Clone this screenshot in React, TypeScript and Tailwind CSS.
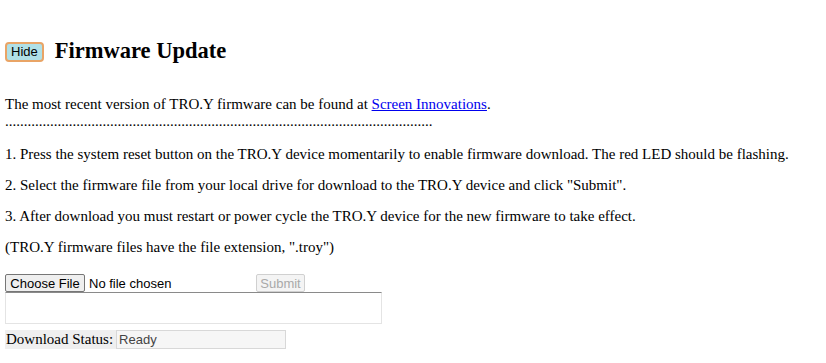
import React from "react";

export default function App() {
  const dots = ".".repeat(114);
  return (
    <div className="font-['Liberation_Serif',serif] text-[15px] leading-[17px] text-black bg-white w-[826px] h-[363px] overflow-hidden pl-[5px]">
      <div className="flex items-center gap-[11px] pt-[42px] h-[62px]">
        <button className="h-[20px] px-[4px] rounded-[4px] border-2 border-[#e9a466] bg-[#b0e0e6] font-['Liberation_Sans',sans-serif] text-[13px] leading-[14px] text-black">
          Hide
        </button>
        <h1 className="text-[22.5px] leading-[24px] font-bold -mt-[3px]">Firmware Update</h1>
      </div>
      <p className="mt-[34px]">
        The most recent version of TRO.Y firmware can be found at{" "}
        <a href="#" className="text-[#0000ee] underline">
          Screen Innovations
        </a>
        .
        <br />
        {dots}
      </p>
      <p className="mt-[16px]">
        1. Press the system reset button on the TRO.Y device momentarily to enable firmware download. The red LED should be flashing.
      </p>
      <p className="mt-[14px]">
        2. Select the firmware file from your local drive for download to the TRO.Y device and click "Submit".
      </p>
      <p className="mt-[14px]">
        3. After download you must restart or power cycle the TRO.Y device for the new firmware to take effect.
      </p>
      <p className="mt-[14px]">(TRO.Y firmware files have the file extension, ".troy")</p>
      <div className="mt-[18px] flex items-center h-[18px] font-['Liberation_Sans',sans-serif] text-[13px] leading-[15px]">
        <span className="h-[18px] w-[80px] flex items-center justify-center border border-[#767676] rounded-[2px] bg-[#efefef] text-black">
          Choose File
        </span>
        <span className="ml-[4px] w-[167px]">No file chosen</span>
        <span className="h-[18px] w-[49px] flex items-center justify-center border border-[#d0d0d0] rounded-[2px] bg-[#f4f4f4] text-[#a9a9a9]">
          Submit
        </span>
      </div>
      <div className="w-[377px] h-[32px] border border-[#e4e4e4] border-t-[#8a8a8a] bg-white" />
      <div className="mt-[6px] flex items-center h-[19px]">
        <span className="bg-[#efefef] h-[19px] pl-[1px] pr-[3px] flex items-center">Download Status:</span>
        <span className="h-[19px] w-[170px] border border-[#d8d8d8] bg-[#f6f6f6] font-['Liberation_Sans',sans-serif] text-[13px] text-[#444] flex items-center pl-[2px]">
          Ready
        </span>
      </div>
    </div>
  );
}
